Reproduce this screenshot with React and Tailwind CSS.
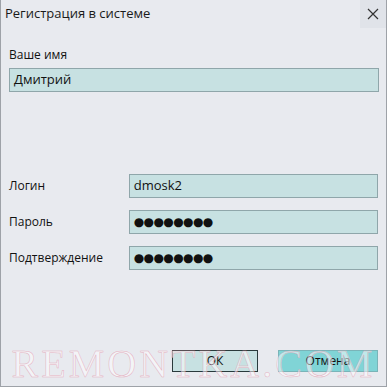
export default function App() {
  const font = { fontFamily: '"Open Sans", "Noto Sans", sans-serif' };
  return (
    <div className="w-[387px] h-[387px] bg-[#e8eaef] border-x border-b border-[#9ea2a8] relative overflow-hidden" style={font}>
      <div className="h-[28px] flex items-center justify-between pl-[4px]">
        <span className="text-[13px] text-[#1a1a1a]">Регистрация в системе</span>
        <div className="w-[26px] h-[28px] flex items-center justify-center bg-[#e0e3e9]">
          <svg width="12" height="12" viewBox="0 0 12 12"><path d="M1 1L11 11M11 1L1 11" stroke="#333" strokeWidth="1.2" /></svg>
        </div>
      </div>
      <div className="px-[8px] pt-[19px] flex flex-col">
        <span className="text-[12px] text-[#111] leading-[16px]">Ваше имя</span>
        <div className="mt-[5px] h-[24px] w-[370px] bg-[#c7e1e2] border border-[#8fa6aa] flex items-center px-[4px] text-[13px] text-[#111]">Дмитрий</div>
        <div className="mt-[82px] flex flex-col gap-[12px]">
          {[['Логин', 'dmosk2'], ['Пароль', '●●●●●●●●'], ['Подтверждение', '●●●●●●●●']].map(([l, v], i) => (
            <div key={l} className="flex items-center">
              <span className="w-[120px] text-[12px] text-[#111]">{l}</span>
              <div className={`h-[24px] w-[250px] bg-[#c7e1e2] border border-[#8fa6aa] flex items-center px-[4px] text-[#111] ${i === 0 ? 'text-[13px]' : 'text-[12px] tracking-[-0.6px] leading-none'}`} style={i === 0 ? undefined : { fontFamily: '"DejaVu Sans", sans-serif' }}>{v}</div>
            </div>
          ))}
        </div>
      </div>
      <div className="absolute right-[8px] top-[350px] flex gap-[20px]">
        <div className="w-[86px] h-[22px] bg-[#c7e1e2] border border-[#2a3a3c] flex items-center justify-center text-[12px] text-[#111]">ОК</div>
        <div className="w-[100px] h-[22px] bg-[#80d4d6] border border-[#7ab4b8] flex items-center justify-center text-[12px] text-[#111]">Отмена</div>
      </div>
      <div className="absolute left-0 right-0 top-[334px] flex justify-center pointer-events-none">
        <span className="text-[40px] tracking-[3px] text-white/50" style={{ fontFamily: '"Liberation Serif", serif', WebkitTextStroke: '0.5px rgba(226,160,178,0.8)' }}>REMONTKA.COM</span>
      </div>
    </div>
  );
}
